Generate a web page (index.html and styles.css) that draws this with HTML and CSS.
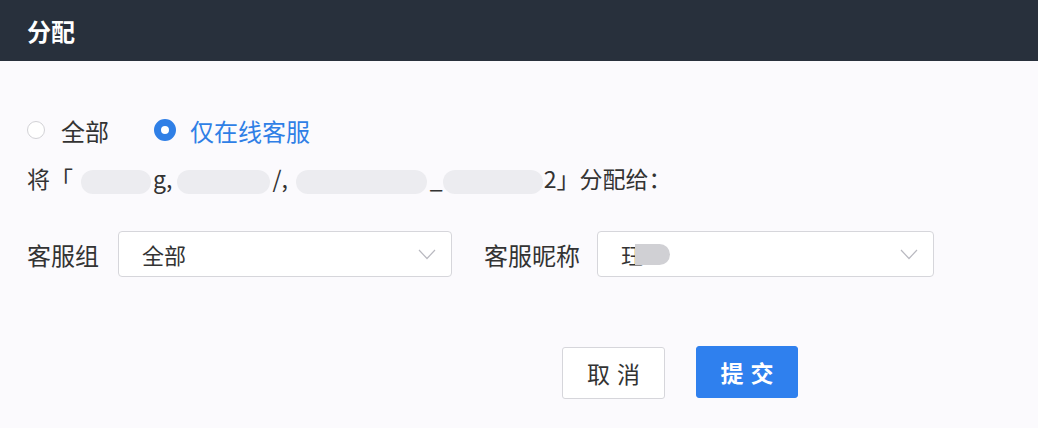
FILE: index.html
```html
<!DOCTYPE html>
<html lang="zh">
  <head>
    <meta charset="UTF-8" />
    <title>分配</title>
    <link rel="stylesheet" href="styles.css">
  </head>
  <body>
    <header class="dialog-header">
      <h1 class="dialog-title">分配</h1>
    </header>

    <main class="dialog-body">
      <!-- filtro de clientes -->
      <div class="radio-row">
        <label class="radio">
          <span class="radio-dot"></span>
          <span>全部</span>
        </label>
        <label class="radio radio-checked">
          <span class="radio-dot"></span>
          <span>仅在线客服</span>
        </label>
      </div>

      <p class="assign-text">将「<span class="mask mask-1"></span>g,<span class="mask mask-2"></span>/,<span class="mask mask-3"></span>_<span class="mask mask-4"></span>2」分配给：</p>

      <div class="form-row">
        <div class="field">
          <span class="field-label">客服组</span>
          <div class="select">
            <span>全部</span>
            <svg class="chevron" width="18" height="11" viewBox="0 0 18 11"><path d="M1 1l8 8.5 8-8.5" fill="none" stroke="#b9b9c0" stroke-width="1.2"/></svg>
          </div>
        </div>
        <div class="field">
          <span class="field-label">客服昵称</span>
          <div class="select">
            <span class="select-value">珏<span class="mask mask-name"></span></span>
            <svg class="chevron" width="18" height="11" viewBox="0 0 18 11"><path d="M1 1l8 8.5 8-8.5" fill="none" stroke="#b9b9c0" stroke-width="1.2"/></svg>
          </div>
        </div>
      </div>

      <div class="actions">
        <button class="btn">取消</button>
        <button class="btn btn-primary">提交</button>
      </div>
    </main>
  </body>
</html>
```

FILE: styles.css
```css
html {
  box-sizing: border-box;
  font-family: "Noto Sans CJK SC", "Noto Sans", sans-serif;
  font-size: 16px;
}

*,
*:before,
*:after {
  box-sizing: inherit;
}

body {
  margin: 0;
  min-height: 100vh;
  background-color: #fbfafd;
  color: #333;
}

/* cabecera oscura */
.dialog-header {
  height: 61px;
  background-color: #28303c;
  display: flex;
  align-items: center;
  padding-left: 27px;
}

.dialog-title {
  margin: 0;
  color: #fff;
  font-size: 24px;
  font-weight: 700;
}

.dialog-body {
  padding: 52px 27px 0;
}

.radio-row {
  display: flex;
  align-items: center;
  gap: 45px;
  height: 34px;
  font-size: 24px;
}

.radio {
  display: flex;
  align-items: center;
  gap: 16px;
}

.radio-dot {
  flex-shrink: 0;
  width: 18px;
  height: 18px;
  border-radius: 50%;
  border: 1px solid #d2d2d6;
  background-color: #fff;
}

.radio-checked {
  color: #2f7fe6;
  gap: 14px;
}

.radio-checked .radio-dot {
  width: 22px;
  height: 22px;
  border: 7px solid #2f7fe6;
  background-color: #fff;
}

.assign-text {
  margin: 15px 0 0;
  font-size: 23px;
  line-height: 32px;
  height: 32px;
  white-space: nowrap;
}

/* texto oculto */
.mask {
  display: inline-block;
  vertical-align: middle;
  height: 24px;
  border-radius: 12px;
  background-color: #ececf0;
}

.mask-1 { width: 70px; margin: 0 2px 0 8px; }
.mask-2 { width: 93px; margin: 0 2px 0 5px; }
.mask-3 { width: 131px; margin: 0 3px 0 8px; }
.mask-4 { width: 100px; margin: 0 1px 0 0; }

.form-row {
  display: flex;
  gap: 32px;
  margin-top: 37px;
}

.field {
  display: flex;
  align-items: center;
  gap: 19px;
}

.field + .field {
  gap: 17px;
}

.field-label {
  font-size: 24px;
}

.select {
  width: 334px;
  height: 46px;
  border: 1px solid #d6d6db;
  border-radius: 4px;
  background-color: #fff;
  display: flex;
  align-items: center;
  justify-content: space-between;
  padding: 0 15px 0 23px;
  font-size: 22px;
}

.field + .field .select {
  width: 337px;
}

.select-value {
  display: flex;
  align-items: center;
}

.mask-name {
  width: 35px;
  height: 21px;
  border-radius: 0 11px 11px 0;
  background-color: #d0d0d4;
  margin-left: -8px;
}

.actions {
  display: flex;
  gap: 31px;
  margin: 70px 0 0 535px;
}

.btn {
  width: 103px;
  height: 52px;
  border: 1px solid #d6d6db;
  border-radius: 3px;
  background-color: #fff;
  font-family: inherit;
  font-size: 23px;
  letter-spacing: 7px;
  padding: 0 0 0 7px;
  color: #333;
}

.btn-primary {
  width: 102px;
  margin-top: -1px;
  border-color: #2f80ee;
  background-color: #2f80ee;
  color: #fff;
  font-weight: 700;
}
```
